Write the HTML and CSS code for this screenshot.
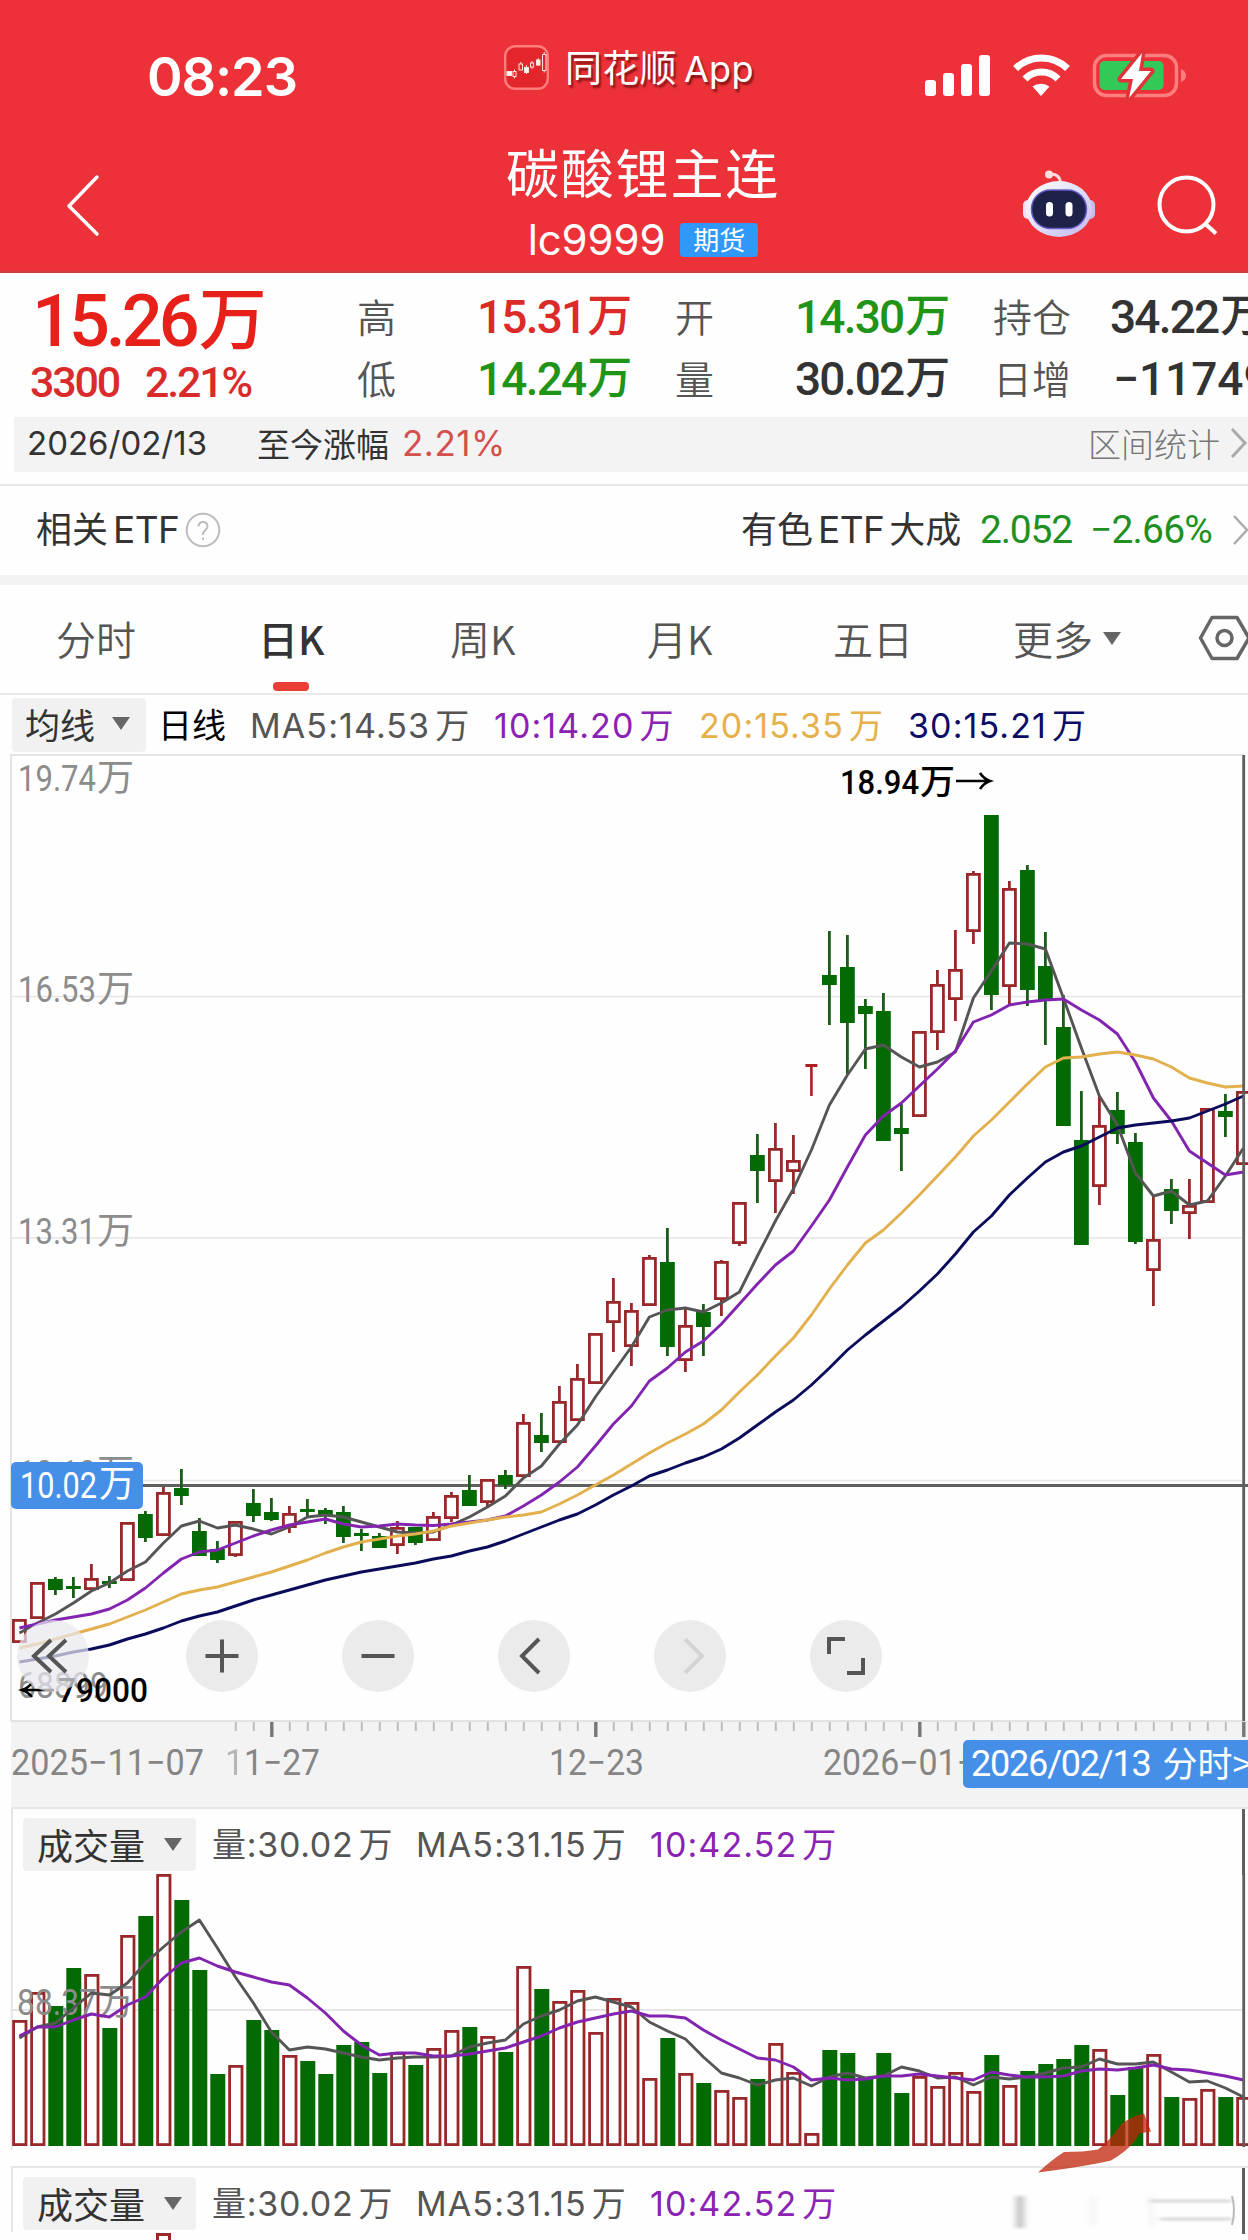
FILE: index.html
```html
<!DOCTYPE html>
<html lang="zh-CN">
<head>
<meta charset="utf-8">
<title>碳酸锂主连</title>
<link rel="stylesheet" href="styles.css">
</head>
<body>
<div class="screen">
  <header class="header">
    <div class="status">
      <span class="clock">08:23</span>
      <span class="brand">
        <svg class="brand-logo" viewBox="0 0 45 45" width="45" height="45">
          <rect x="1.200" y="1.200" width="42.600" height="42.600" rx="10" fill="#e3262b" stroke="#ff7c7c" stroke-width="2.400"/>
          <g fill="#fff" stroke="#ffe3e0" stroke-width="1">
            <rect x="3" y="26.500" width="4.500" height="4"/>
            <rect x="9" y="26.500" width="3" height="5" fill="none"/><path d="M10.500 24.500v2M10.500 31.500v2"/>
            <rect x="15" y="19" width="3.500" height="6" fill="none"/><path d="M16.700 17v2"/>
            <rect x="20.500" y="22.500" width="4" height="5"/><path d="M22.500 20v9"/>
            <rect x="26.500" y="18" width="3" height="4" fill="none"/><path d="M28 16v2M28 22v2"/>
            <rect x="32.500" y="15" width="3.500" height="5"/><path d="M34.200 13v8"/>
            <rect x="38.500" y="9.500" width="3.500" height="16" fill="none"/><path d="M40.200 7v2.500M40.200 25.500v2"/>
          </g>
        </svg>
        <span class="brand-name">同花顺<span class="brand-app">App</span></span>
      </span>
      <svg class="status-icons" viewBox="920 44 270 64" width="270" height="64">
        <g fill="#fff">
          <rect x="925" y="80" width="11" height="16" rx="3"/>
          <rect x="943" y="73" width="11" height="23" rx="3"/>
          <rect x="961" y="64" width="11" height="32" rx="3"/>
          <rect x="979" y="55" width="11" height="41" rx="3"/>
          <path d="M1041 96l-8.500-9.500a13 11 0 0 1 17 0z"/>
        </g>
        <g fill="none" stroke="#fff" stroke-width="7">
          <path d="M1015.500 68.500a37.500 37.500 0 0 1 52 0"/>
          <path d="M1025 79a23 23 0 0 1 33 0"/>
        </g>
        <rect x="1094.500" y="55.500" width="82" height="40" rx="12" fill="none" stroke="#ff7f80" stroke-width="3.500"/>
        <path d="M1181 69q5 2 5 6.500t-5 6.500z" fill="#ff7f80"/>
        <rect x="1099.500" y="61" width="64" height="29" rx="5" fill="#33c958"/>
        <path d="M1142 53l-21 26h12l-4 19 22-27h-12z" fill="#fff" stroke="#e0343a" stroke-width="7" stroke-linejoin="round" paint-order="stroke"/>
      </svg>
    </div>
    <div class="navbar">
      <svg class="back" viewBox="62 168 44 76" width="44" height="76"><path d="M97 177L69 206l28 28" fill="none" stroke="#fff" stroke-width="3.500" stroke-linecap="round" stroke-linejoin="round"/></svg>
      <div class="title">
        <h1>碳酸锂主连</h1>
        <p><span class="code">lc9999</span><span class="tag">期货</span></p>
      </div>
      <svg class="robot" viewBox="1020 166 78 76" width="78" height="76">
        <defs><linearGradient id="shell" x1="0" y1="0" x2="1" y2="1"><stop offset="0" stop-color="#ffffff"/><stop offset=".55" stop-color="#dcdcf8"/><stop offset="1" stop-color="#c5b4ec"/></linearGradient></defs>
        <path d="M1050 174q9-1 11 9" fill="none" stroke="#ffd9dc" stroke-width="3"/>
        <circle cx="1049" cy="174.500" r="4" fill="#ffdfe0"/>
        <rect x="1023" y="200" width="10" height="19" rx="5" fill="#f3dff0"/>
        <rect x="1085" y="200" width="10" height="19" rx="5" fill="#c9bcf0"/>
        <ellipse cx="1059" cy="209" rx="33" ry="28" fill="url(#shell)"/>
        <rect x="1031.500" y="190" width="55" height="38.500" rx="19" fill="#1d2348" stroke="#6a5ac8" stroke-width="1.500"/>
        <rect x="1046" y="202" width="7" height="14.500" rx="3.500" fill="#fff"/>
        <rect x="1065.500" y="202" width="7" height="14.500" rx="3.500" fill="#fff"/>
      </svg>
      <svg class="search" viewBox="1155 172 66 68" width="66" height="68"><g fill="none" stroke="#fff" stroke-width="4"><ellipse cx="1186.500" cy="204.500" rx="27" ry="27"/><path d="M1205 223.500l11 10"/></g></svg>
    </div>
  </header>

  <section class="quote">
    <div class="last">
      <div class="last-price">15.26<span class="wan">万</span></div>
      <div class="last-change"><span>3300</span><span>2.21%</span></div>
    </div>
    <div class="fields">
      <span class="label">高</span><span class="value up">15.31<span class="wan">万</span></span>
      <span class="label">开</span><span class="value down">14.30<span class="wan">万</span></span>
      <span class="label">持仓</span><span class="value">34.22<span class="wan">万</span></span>
      <span class="label">低</span><span class="value down">14.24<span class="wan">万</span></span>
      <span class="label">量</span><span class="value">30.02<span class="wan">万</span></span>
      <span class="label">日增</span><span class="value wide">−11749</span>
    </div>
  </section>

  <section class="range">
    <span class="range-date">2026/02/13</span>
    <span class="range-label">至今涨幅</span>
    <span class="range-pct">2.21%</span>
    <span class="range-link">区间统计</span>
    <svg class="chev" viewBox="0 0 18 32" width="18" height="32"><path d="M2 2l13 14L2 30" fill="none" stroke="#aaa" stroke-width="3"/></svg>
  </section>

  <section class="etf">
    <span class="etf-title">相关<b>ETF</b></span>
    <svg class="help" viewBox="0 0 36 36" width="36" height="36"><circle cx="18" cy="18" r="16.300" fill="none" stroke="#bdbdbd" stroke-width="2"/><path d="M13.500 14.500q.5-4.500 4.500-4.500t4.500 4q0 2.500-2.500 4.500t-2 4.500M18 25.500v2.500" fill="none" stroke="#bdbdbd" stroke-width="2"/></svg>
    <span class="etf-name">有色<b>ETF</b>大成</span>
    <span class="etf-price">2.052</span>
    <span class="etf-pct">−2.66%</span>
    <svg class="chev" viewBox="0 0 18 32" width="18" height="32"><path d="M2 2l13 14L2 30" fill="none" stroke="#aaa" stroke-width="2.500"/></svg>
  </section>

  <nav class="tabs">
    <span>分时</span><span class="active">日K</span><span>周K</span><span>月K</span><span>五日</span>
    <span class="more">更多<i class="tri"></i></span>
    <svg viewBox="1197 614 54 50" width="54" height="50"><g fill="none" stroke="#666" stroke-width="3.500" stroke-linejoin="round"><path d="M1212 618.500h25l12 20.500-12 20.500h-25l-11.500-20.500z"/><circle cx="1224.500" cy="639" r="7.500"/></g></svg>
  </nav>

  <section class="legend">
    <span class="picker">均线<i class="tri"></i></span>
    <span class="period">日线</span>
    <span class="ma5">MA5:14.53<em>万</em></span>
    <span class="ma10">10:14.20<em>万</em></span>
    <span class="ma20">20:15.35<em>万</em></span>
    <span class="ma30">30:15.21<em>万</em></span>
  </section>

  <section class="price-chart">
    <svg id="price" viewBox="0 754 1248 967" width="1248" height="967"></svg>
    <span class="price-pill"><svg viewBox="0 0 132 47" width="132" height="47"><text class="pill-text" x="9" y="36" textLength="77" lengthAdjust="spacingAndGlyphs">10.02</text><text class="pill-text" x="88" y="35" textLength="36" lengthAdjust="spacingAndGlyphs">万</text></svg></span>
    <div class="controls">
      <button class="faded"><svg viewBox="-36 -36 72 72"><path d="M-2-16l-17 16 17 16M13-16L-4 0l17 16"/></svg></button>
      <button><svg viewBox="-36 -36 72 72"><path d="M-16.500 0h33M0-16.500v33"/></svg></button>
      <button><svg viewBox="-36 -36 72 72"><path d="M-16.500 0h33"/></svg></button>
      <button><svg viewBox="-36 -36 72 72"><path d="M5-17L-12 0 5 17"/></svg></button>
      <button class="off"><svg viewBox="-36 -36 72 72"><path d="M-5-17L12 0-5 17"/></svg></button>
      <button><svg viewBox="-36 -36 72 72"><path d="M-17-2v-15h16M17 2v15H1"/></svg></button>
    </div>
  </section>

  <section class="axis">
    <svg id="ticks" viewBox="0 1721 1248 86" width="1248" height="86"></svg>
    <span class="date-pill">2026/02/13<span class="pill-cn">分时&gt;</span></span>
  </section>

  <section class="volume">
    <div class="vol-head">
      <span class="picker">成交量<i class="tri"></i></span>
      <span class="ma5 amount">量:30.02<em>万</em></span>
      <span class="ma5">MA5:31.15<em>万</em></span>
      <span class="ma10">10:42.52<em>万</em></span>
    </div>
    <svg id="vol" viewBox="0 1873 1248 292" width="1248" height="292"></svg>
  </section>

  <section class="volume second">
    <div class="vol-head">
      <span class="picker">成交量<i class="tri"></i></span>
      <span class="ma5 amount">量:30.02<em>万</em></span>
      <span class="ma5">MA5:31.15<em>万</em></span>
      <span class="ma10">10:42.52<em>万</em></span>
    </div>
    <svg viewBox="0 2232 1248 8" width="1248" height="8"><path d="M157.500 2240v-5.500h12v5.500" fill="none" stroke="#98282a" stroke-width="3"/></svg>
  </section>

  <svg class="stroke-mark" viewBox="1010 2100 238 140" width="238" height="140">
    <defs><filter id="soft"><feGaussianBlur stdDeviation="3 1.500"/></filter></defs>
    <path d="M1038 2172.500q14-13 26-20.500 20 0 34-2.500 11-8 24-26 11-8 22-10l7 18-12 2q-6 14-28 27-26 6-73 12z" fill="#c0260c" fill-opacity=".76"/>
    <rect x="1012" y="2180" width="228" height="60" fill="#fefefe"/>
    <g filter="url(#soft)" fill="#aaa">
      <rect x="1016" y="2196" width="8" height="32" opacity=".7"/>
      <rect x="1150" y="2200" width="82" height="2" opacity=".7"/>
      <rect x="1160" y="2218" width="72" height="2" opacity=".7"/>
      <rect x="1092" y="2196" width="2" height="30" opacity=".3"/>
      <rect x="1150" y="2196" width="2" height="30" opacity=".3"/>
    </g>
    <path d="M1232 2196q4 14 0 29" fill="none" stroke="#bbb" stroke-width="2"/>
  </svg>
</div>
<script src="chart.js"></script>
</body>
</html>
```

FILE: styles.css
```css
* { box-sizing: border-box; }
body { margin: 0; background: #fff; font-family: "Inter", "Noto Sans CJK SC", sans-serif; color: #333; }
.screen { position: relative; width: 1248px; height: 2240px; overflow: hidden; background: #fefefe; }
svg { display: block; flex: none; }
em, i, b { font-style: normal; font-weight: inherit; }
span { white-space: nowrap; }

.header { height: 273px; background: #ed3138; border-bottom: 2px solid #c9403f; color: #fff; }
.status { height: 134px; display: grid; grid-template-columns: 147px 357px 416px 328px; align-items: start; }
.clock { grid-column: 2; margin-top: 44px; font-size: 54px; line-height: 66px; font-weight: 600; letter-spacing: -1.1px; }
.brand { grid-column: 3; display: flex; margin-top: 45px; gap: 16px; }
.brand-name { font: 37px/42px "Noto Sans CJK SC", sans-serif; text-shadow: 2px 3px 2px rgba(70,0,0,.6); letter-spacing: .3px; }
.brand-app { margin-left: 7px; font-family: "Inter", sans-serif; font-size: 36px; letter-spacing: .3px; }
.status-icons { margin-top: 44px; }
.navbar { height: 137px; display: flex; align-items: flex-start; }
.back { margin: 34px 0 0 62px; }
.title { width: 284px; margin: 7px 0 0 395px; text-align: center; }
.title h1 { margin: 0; font: 400 53px/60px "Noto Sans CJK SC", sans-serif; letter-spacing: 1.8px; }
.title p { margin: 14px 0 0; display: flex; justify-content: center; align-items: center; gap: 15px; height: 50px; }
.code { font-size: 42px; line-height: 50px; letter-spacing: -.1px; }
.tag { width: 78px; height: 34px; border-radius: 4px; background: #2f98f8; font: 26px/31px "Noto Sans CJK SC", sans-serif; text-align: center; }
.robot { margin: 32px 0 0 235px; }
.search { margin: 38px 0 0 57px; }

.quote { height: 144px; display: flex; }
.last { width: 357px; padding: 10px 0 0 32px; color: #e8201a; font-family: "Roboto", "Noto Sans CJK SC", sans-serif; font-weight: 500; }
.last-price { height: 78px; font-size: 72px; line-height: 78px; letter-spacing: -4px; display: flex; }
.last-price .wan { font-size: 68px; margin-left: 3px; letter-spacing: 0; line-height: 76px; }
.last-change { display: flex; gap: 26px; margin: -5px 0 0 -2px; font-size: 43px; line-height: 52px; letter-spacing: -2.2px; color: #d92b2b; }
.fields { width: 891px; padding-top: 13px; display: grid; grid-template-columns: 78px 240px 78px 240px 110px 240px; grid-auto-rows: 62px; overflow: hidden; }
.label { font: 350 39px/59px "Noto Sans CJK SC", sans-serif; color: #555; }
.value { font: 500 46px/62px "Roboto", "Noto Sans CJK SC", sans-serif; letter-spacing: -1.8px; padding-left: 42px; display: flex; color: #333; }
.value .wan { margin-left: 2px; letter-spacing: 0; font-size: 45px; }
.value:nth-child(6n) { padding-left: 7px; }
.value.wide { letter-spacing: 0; padding-left: 10px; }
.up { color: #db2a28; }
.down { color: #1f9418; }

.range { height: 55px; margin-left: 14px; background: #f3f3f3; display: grid; grid-template-columns: 13px 230px 145px 686px 142px 20px; align-items: center; color: #333; padding-bottom: 3px; }
.range-date { grid-column: 2; font-size: 33px; letter-spacing: 0; }
.range-label { font-size: 33px; }
.range-pct { font-size: 35px; color: #d4504f; letter-spacing: .5px; }
.range-link { font-size: 33px; font-weight: 300; color: #777; }

.etf { height: 101px; margin-top: 12px; border-top: 2px solid #e8e8e8; border-bottom: 10px solid #f3f3f3; display: grid; grid-template-columns: 36px 149px 556px 239px 110px 142px 20px; align-items: center; color: #333; font-size: 36px; padding-bottom: 2px; }
.etf-title { grid-column: 2; }
.etf-title, .etf-name { margin-top: -5px; }
.etf b { margin: 0 5px; font-size: 37px; letter-spacing: -.6px; }
.etf-price, .etf-pct { font: 400 39px/50px "Roboto", sans-serif; color: #1f9022; letter-spacing: -1.2px; }
.etf-pct { letter-spacing: -.8px; }

.tabs { height: 110px; border-bottom: 2px solid #e9e9e9; display: grid; grid-template-columns: 56px 202px 192px 197px 186px 180px 184px 54px; align-items: center; font: 350 40px/104px "Noto Sans CJK SC", sans-serif; color: #555; padding-bottom: 2px; }
.tabs span:first-child { grid-column: 2; }
.tabs .active { position: relative; color: #333; font-weight: 500; }
.tabs .active::after { content: ""; position: absolute; left: 15px; bottom: -1px; width: 36px; height: 9px; border-radius: 4px; background: #ea3e37; }
.tabs .more { display: flex; align-items: center; gap: 10px; }
.tri { width: 0; height: 0; border: 9px solid transparent; border-top: 13px solid #666; border-bottom: 0; }

.legend { height: 59px; display: grid; grid-template-columns: 12px 146px 92px 244px 205px 209px 200px; align-items: center; font-size: 34px; letter-spacing: 1.1px; }
.legend > .ma5, .legend > .ma10, .legend > .ma20, .legend > .ma30, .legend > .period { margin-top: -3px; }
.picker { display: flex; align-items: center; background: #f1f1f1; border-radius: 4px; font-family: "Noto Sans CJK SC", sans-serif; color: #333; letter-spacing: 0; }
.legend .picker { grid-column: 2; width: 134px; height: 54px; padding: 0 0 3px 13px; gap: 17px; font-size: 35px; }
.period { font-family: "Noto Sans CJK SC", sans-serif; color: #000; font-size: 34px; letter-spacing: 0; }
.ma5 { color: #555; } .ma10 { color: #8a22b4; } .ma20 { color: #e6b04a; } .ma30 { color: #0c0c66; }
.ma5 em, .ma10 em, .ma20 em, .ma30 em { margin-left: 5px; font-size: 34px; }

.price-chart { position: relative; height: 967px; }
svg text { font-family: "Roboto", "Noto Sans CJK SC", sans-serif; }
.axis-label { font-size: 37px; fill: #8c8c8c; }
.mark { font-size: 34px; font-weight: 500; fill: #000; }
.tick-label { font-size: 36px; fill: #858585; }
.pill-text { font-size: 37px; fill: #fff; }
.price-pill { position: absolute; left: 11px; top: 708px; width: 132px; height: 47px; border-radius: 5px; background: #468fe9; }
.controls { position: absolute; left: 17px; top: 866px; display: flex; gap: 84px; }
.controls button { width: 72px; height: 72px; padding: 0; border: 0; border-radius: 50%; background: #ebebeb; }
.controls .faded { background: rgba(232,232,238,.72); margin-right: 13px; }
.controls path { fill: none; stroke: #555; stroke-width: 4; }
.controls .off path { stroke: #d5d5d5; }

.axis { position: relative; height: 86px; }
.date-pill { position: absolute; left: 963px; top: 19px; width: 300px; height: 48px; padding-left: 8px; border-radius: 5px; background: #468fe9; color: #fff; font: 400 36px/48px "Roboto", sans-serif; letter-spacing: -1.2px; display: flex; }
.pill-cn { margin-left: 12px; font: 35px/44px "Noto Sans CJK SC", sans-serif; letter-spacing: 0; }

.volume { position: relative; height: 358px; }
.vol-head { height: 66px; margin-left: 11px; border: 2px solid #e6e6e6; border-width: 2px 0 0 2px; position: relative; display: grid; grid-template-columns: 10px 189px 204px 234px 200px; align-items: center; font-size: 34px; letter-spacing: 1.1px; padding-top: 2px; }
.vol-head::after { content: ""; position: absolute; right: 3px; top: 0; width: 3px; height: 66px; background: #5f5f5f; }
.vol-head .picker { grid-column: 2; width: 173px; height: 53px; padding-left: 14px; gap: 19px; font-size: 36px; margin-top: 4px; }
.vol-head .amount { letter-spacing: .7px; }
.second { margin-top: 1px; }
.stroke-mark { position: absolute; left: 1010px; top: 2100px; }
```

FILE: chart.js
```javascript
const X0 = 19.4, STEP = 18;
const x = i => X0 + STEP * i;
const RED = "#98282a", GREEN = "#046a04";

// [rising, high, body top, body bottom, low] as vertical positions
const candles = [
[1,1619,1619,1643,1643],[1,1582,1582,1619,1619],[0,1577,1579,1590,1595],[0,1577,1586,1589,1598],[1,1564,1578,1590,1590],
[0,1576,1581,1584,1588],[1,1522,1522,1581,1581],[0,1511,1514,1538,1542],[1,1487,1492,1536,1536],[0,1469,1488,1496,1505],
[0,1518,1531,1556,1556],[0,1541,1549,1560,1563],[1,1521,1521,1556,1557],[0,1489,1503,1516,1522],[0,1498,1512,1520,1521],
[1,1506,1513,1528,1533],[0,1499,1509,1512,1516],[0,1508,1510,1515,1524],[0,1506,1512,1537,1543],[0,1529,1533,1536,1551],
[0,1533,1536,1548,1548],[1,1521,1527,1546,1554],[0,1527,1527,1543,1545],[1,1512,1516,1541,1541],[1,1492,1495,1519,1522],
[0,1475,1490,1506,1506],[1,1479,1479,1503,1508],[0,1470,1475,1485,1489],[1,1414,1422,1477,1477],[0,1413,1435,1443,1452],
[1,1386,1401,1443,1443],[1,1364,1378,1421,1421],[1,1333,1333,1384,1384],[1,1278,1301,1323,1352],[1,1303,1310,1347,1366],
[1,1255,1257,1306,1306],[0,1228,1262,1347,1356],[1,1308,1325,1361,1372],[0,1304,1312,1327,1356],[1,1260,1261,1300,1316],
[1,1202,1202,1244,1246],[0,1134,1155,1171,1203],[1,1123,1148,1182,1213],[1,1135,1160,1172,1194],[2,1064,1064,1067,1096],
[0,931,975,985,1025],[0,935,967,1023,1074],[0,999,1006,1014,1069],[0,993,1011,1141,1141],[0,1104,1128,1134,1171],
[1,1031,1031,1117,1117],[1,970,984,1033,1050],[1,930,969,1000,1021],[1,871,873,932,944],[0,815,815,995,1010],
[1,881,888,987,1005],[0,865,870,990,1006],[0,932,966,1000,1045],[0,995,1027,1126,1126],[0,1091,1140,1245,1245],
[1,1096,1125,1187,1205],[0,1092,1110,1134,1144],[0,1133,1142,1242,1244],[1,1197,1239,1271,1306],[0,1179,1189,1211,1224],
[1,1179,1205,1214,1239],[1,1108,1108,1203,1203],[0,1094,1111,1117,1137],[1,1091,1091,1165,1165]];

const ma5 = [1633,1623,1614,1603,1591,1583,1571,1562,1543,1526,1521,1528,1525,1529,1534,1527,1517,1515,1517,1522,1527,1532,1533,1532,1525,1517,1507,1496,1478,1466,1444,1425,1397,1372,1347,1317,1310,1308,1312,1303,1292,1256,1221,1189,1150,1105,1075,1049,1045,1057,1067,1062,1052,998,971,943,944,949,998,1048,1096,1125,1173,1196,1191,1205,1201,1176,1148];
const ma10 = [1628,1624,1620,1617,1614,1609,1600,1588,1573,1559,1552,1550,1543,1536,1530,1525,1522,1519,1524,1527,1526,1524,1525,1525.5,1524,1522,1520,1516,1506,1495,1482,1467,1446,1424,1406,1381,1368,1352,1341,1324,1304,1284,1265,1251,1226,1200,1167,1135,1116,1103,1086,1069,1051,1022,1015,1005,1002,1000,999,1010,1020,1034,1062,1098,1121,1151,1163,1175,1172];
const ma20 = [1648,1644,1639,1634,1629,1624,1617,1610,1602,1594,1590,1587,1582,1577,1572,1566,1560,1553,1547,1542,1539,1536,1534,1531,1526,1523,1520,1517,1515,1512,1504,1495,1485,1475,1464,1453,1443,1434,1424,1410,1392,1375,1356,1338,1315,1289,1265,1243,1230,1213,1195,1176,1157,1136,1120,1102,1084,1067,1058,1057,1054,1052,1055,1059,1067,1078,1083,1087,1086];
const ma30 = [1662,1659,1656,1652,1649,1645,1639,1634,1628,1621,1616,1612,1606,1600,1595,1590,1585,1580,1576,1572,1569,1566,1563,1559,1556,1551,1547,1541,1534,1527,1520,1514,1505,1495,1486,1476,1470,1463,1457,1449,1438,1425,1412,1400,1385,1368,1350,1335,1321,1307,1291,1274,1254,1232,1216,1195,1178,1162,1152,1146,1137,1128,1125,1123,1121,1118,1111,1104,1096];

const volTop = [2020,1992,2006,1968,1974,2028,1935,1916,1874,1900,1970,2074,2065,2020,2030,2055,2061,2074,2045,2042,2073,2052,2065,2048,2030,2027,2036,2052,1966,1989,2001,1990,2032,1998,2002,2078,2038,2073,2083,2090,2097,2079,2043,2072,2133,2050,2053,2077,2053,2093,2076,2086,2072,2091,2055,2085,2071,2064,2059,2045,2049,2095,2067,2054,2097,2098,2089,2097,2097];
const v5 = [2038,2027,2023,2008,1993,1995,1983,1963,1947,1932,1920,1948,1977,2003,2032,2050,2047,2049,2053,2057,2060,2058,2057,2057,2056,2047,2043,2040,2024,2016,2010,2001,1997,2002,2007,2022,2031,2039,2057,2073,2078,2085,2080,2078,2086,2077,2073,2078,2076,2067,2071,2078,2077,2085,2077,2079,2077,2073,2068,2067,2059,2064,2064,2062,2072,2082,2081,2088,2097];
const v10 = [2036,2027,2027,2020,2014,2017,2005,1997,1978,1963,1958,1966,1972,1977,1982,1985,1998,2013,2031,2045,2055,2053,2053,2056,2056,2054,2051,2048,2042,2036,2028,2022,2018,2014,2011,2016,2016,2018,2030,2040,2049,2058,2060,2067,2080,2078,2080,2079,2076,2076,2074,2076,2078,2080,2072,2075,2077,2077,2076,2071,2069,2070,2068,2065,2069,2070,2073,2076,2080];

const rect = (l, t, w, h, extra) => `<rect x="${l}" y="${t}" width="${w}" height="${h}" ${extra}/>`;
const seg = (x1, y1, x2, y2, c, w) => `<path d="M${x1} ${y1}L${x2} ${y2}" stroke="${c}" stroke-width="${w}"/>`;
const curve = (pts, c) => `<polyline points="${pts.map((y, i) => x(i) + "," + y).join(" ")}" fill="none" stroke="${c}" stroke-width="2.9" stroke-linejoin="round"/>`;
const label = (cls, l, y, w, s) => `<text class="${cls}" x="${l}" y="${y}" textLength="${w}" lengthAdjust="spacingAndGlyphs">${s}</text>`;
const wan = (cls, l, y, w, s, cw) => label(cls, l, y, w, s) + label(cls, l + w + 1, y, cw, "万");

function candle([kind, hi, top, bot, lo], i) {
  const c = x(i);
  if (kind === 2) return seg(c - 6, 1065.5, c + 6, 1065.5, "#b01c20", 3) + seg(c, 1065, c, lo, "#b01c20", 2.6);
  if (kind === 0) return seg(c, hi, c, lo, "#1a5c1a", 2.8) + rect(c - 7.4, top, 14.8, bot - top, `fill="${GREEN}"`);
  return (hi < top ? seg(c, hi, c, top, RED, 2.8) : "") + (lo > bot ? seg(c, bot, c, lo, RED, 2.8) : "") +
    rect(c - 6, top + 1.4, 12, Math.max(bot - top - 2.8, 2), `fill="#fff" stroke="${RED}" stroke-width="2.8"`);
}

document.getElementById("price").innerHTML =
  rect(11, 755, 1232, 966, 'fill="#fefefe" stroke="#e4e4e4" stroke-width="2"') +
  [996.5, 1238, 1480.5].map(y => seg(11, y, 1243, y, "#e5e5e5", 1.5)).join("") +
  wan("axis-label", 18, 791, 78, "19.74", 37) + wan("axis-label", 18, 1002, 78, "16.53", 37) +
  wan("axis-label", 18, 1244, 78, "13.31", 37) + wan("axis-label", 18, 1486, 78, "10.10", 37) +
  seg(11, 1485.5, 1248, 1485.5, "#606060", 2.8) +
  candles.map(candle).join("") +
  curve(ma5, "#555") + curve(ma10, "#8224b0") + curve(ma20, "#e2b04c") + curve(ma30, "#0b0b5c") +
  seg(1243.7, 755, 1243.7, 1721, "#5f5f5f", 2.8) +
  label("axis-label", 18, 1698, 90, "68899") +
  wan("mark", 840, 794, 79, "18.94", 35) +
  '<path d="M956 781h34M980 773q4 6 10 8-6 2-10 8" fill="none" stroke="#000" stroke-width="2.6"/>' +
  label("mark", 58, 1702, 90, "79000") +
  '<path d="M54 1690H22M32 1683q-4 5-10 7 6 2 10 7" fill="none" stroke="#000" stroke-width="2.6"/>';

let ticks = rect(11, 1721, 1237, 86, 'fill="#f3f3f3"') + seg(11, 1721.5, 1248, 1721.5, "#e0e0e0", 1);
for (let i = 12; i < 69; i++) {
  const major = (i - 14) % 18 === 0;
  ticks += seg(x(i) + .4, 1722, x(i) + .4, major ? 1737 : 1731, major ? "#777" : "#bdbdbd", major ? 3.4 : 2);
}
ticks += label("tick-label", 11, 1775, 193, "2025−11−07") +
  '<g opacity=".55">' + label("tick-label", 225, 1775, 19, "1") + '</g>' + label("tick-label", 244, 1775, 76, "1−27") +
  label("tick-label", 549, 1775, 95, "12−23") + label("tick-label", 823, 1775, 153, "2026−01−");
document.getElementById("ticks").innerHTML = ticks;

document.getElementById("vol").innerHTML =
  seg(11.8, 1873, 11.8, 2150, "#e6e6e6", 2) + seg(11, 2010, 1243, 2010, "#e5e5e5", 2) +
  volTop.map((t, i) => candles[i][0]
    ? rect(x(i) - 5.8, t + 1.4, 12.4, 2146 - t - 2.8, `fill="#fefefe" stroke="${RED}" stroke-width="2.8"`)
    : rect(x(i) - 7.1, t, 15, 2146 - t, `fill="${GREEN}"`)).join("") +
  wan("axis-label", 17, 2015, 80, "88.37", 36) +
  curve(v5, "#555") + curve(v10, "#8224b0") +
  seg(1243.7, 1873, 1243.7, 2147, "#5f5f5f", 2.8);
```
